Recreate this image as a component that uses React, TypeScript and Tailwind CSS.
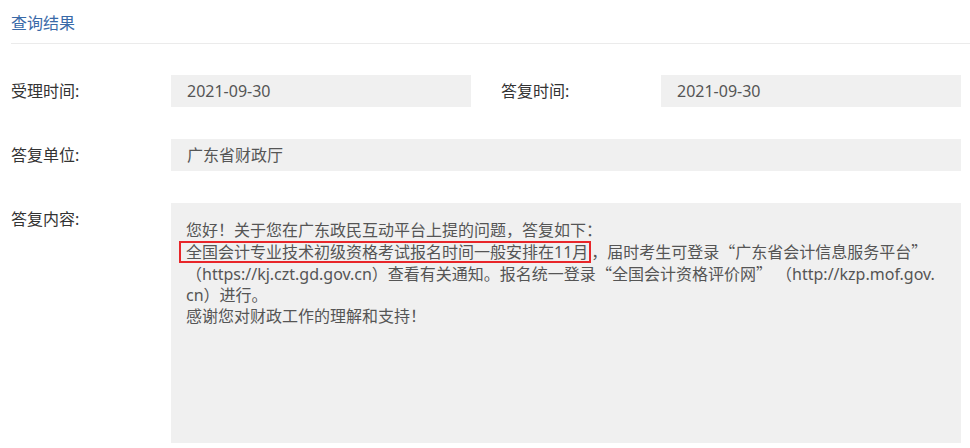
const FONT = "font-['Noto_Sans','Noto_Sans_CJK_SC',sans-serif]";

function Field({ label, value }: { label: string; value: string }) {
  return (
    <div className="flex">
      <div className="w-[160px] shrink-0 text-[16px] leading-[32px] text-[#333]">{label}</div>
      <div className="h-8 flex-1 bg-[#f0f0f0] px-4 text-[16px] leading-[32px] text-[#555]">{value}</div>
    </div>
  );
}

// full-width quote marks, as the CJK face draws them
function Q({ children }: { children: string }) {
  return <span className="font-['Noto_Sans_CJK_SC',sans-serif]">{children}</span>;
}

export default function App() {
  return (
    <div className={`h-[448px] w-[970px] overflow-hidden bg-white pl-[11px] ${FONT}`}>
      <div className="flex h-[44px] items-center border-b border-[#ebebeb] pt-[3px] text-[16px] text-[#3a6aa8]">
        查询结果
      </div>

      <div className="flex w-[950px] flex-col gap-8 pt-[31px]">
        <div className="grid grid-cols-2 gap-[30px]">
          <Field label="受理时间:" value="2021-09-30" />
          <Field label="答复时间:" value="2021-09-30" />
        </div>

        <Field label="答复单位:" value="广东省财政厅" />

        <div className="flex">
          <div className="w-[160px] shrink-0 text-[16px] leading-[32px] text-[#333]">答复内容:</div>
          <div className="h-[240px] flex-1 bg-[#f0f0f0] pl-[15px] pt-[17px] text-[16px] leading-[21px] text-[#555]">
            <p className="whitespace-nowrap">您好！关于您在广东政民互动平台上提的问题，答复如下：</p>
            <p className="whitespace-nowrap">
              <span className="-ml-[7px] inline-block h-[22px] border-2 border-[#e8262a] pl-[5px] pr-[1px] leading-[18px]">
                全国会计专业技术初级资格考试报名时间一般安排在11月
              </span>
              ，届时考生可登录<Q>“</Q>广东省会计信息服务平台<Q>”</Q>
            </p>
            <p className="whitespace-nowrap">
              （https://kj.czt.gd.gov.cn）查看有关通知。报名统一登录<Q>“</Q>全国会计资格评价网<Q>”</Q> （http://kzp.mof.gov.
            </p>
            <p className="whitespace-nowrap">cn）进行。</p>
            <p className="whitespace-nowrap">感谢您对财政工作的理解和支持！</p>
          </div>
        </div>
      </div>
    </div>
  );
}
